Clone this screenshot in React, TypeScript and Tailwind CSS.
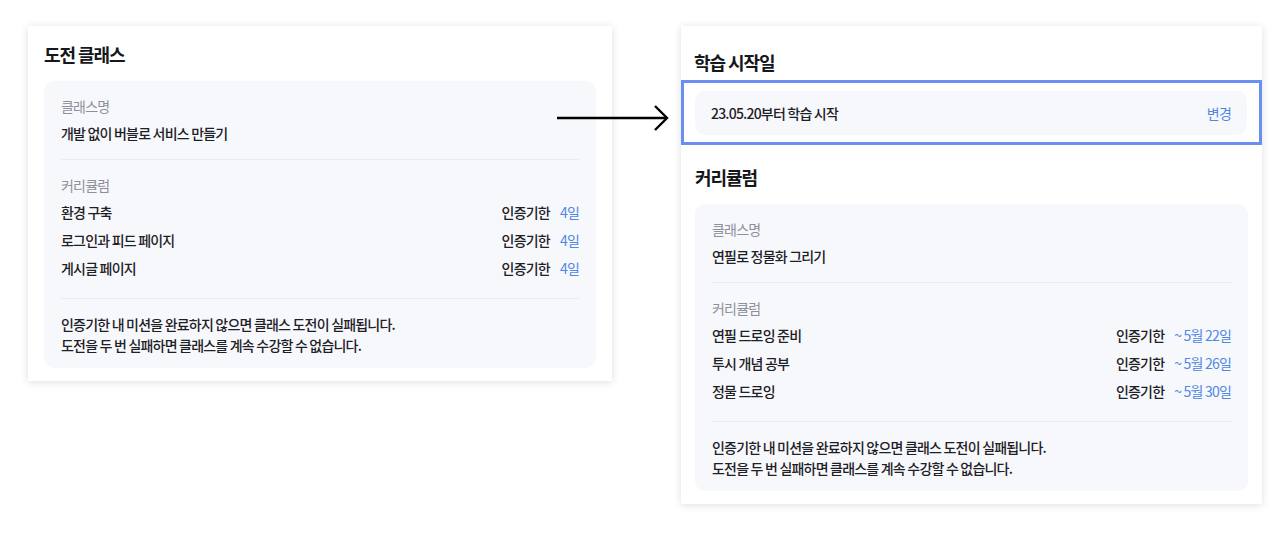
import React from 'react';

type Row = { title: string; due: string };

const leftRows: Row[] = [
  { title: '환경 구축', due: '4일' },
  { title: '로그인과 피드 페이지', due: '4일' },
  { title: '게시글 페이지', due: '4일' },
];

const rightRows: Row[] = [
  { title: '연필 드로잉 준비', due: '~ 5월 22일' },
  { title: '투시 개념 공부', due: '~ 5월 26일' },
  { title: '정물 드로잉', due: '~ 5월 30일' },
];

const ClassBox = ({ name, rows }: { name: string; rows: Row[] }) => (
  <div className="rounded-[10px] bg-[#f7f8fc] px-[17px] pt-[15px] pb-[12px]">
    <p className="text-[14px] leading-[20px] text-[#8c909a]">클래스명</p>
    <p className="mt-[7px] text-[14px] font-medium leading-[20px] text-[#1d2025]">{name}</p>
    <div className="mt-[16px] h-px bg-[#e9ebf0]" />
    <p className="mt-[15px] text-[14px] leading-[20px] text-[#8c909a]">커리큘럼</p>
    <div className="mt-[7px] flex flex-col gap-[8px]">
      {rows.map((r) => (
        <div key={r.title} className="flex items-center justify-between text-[14px] font-medium leading-[20px]">
          <span className="text-[#1d2025]">{r.title}</span>
          <span className="flex gap-[10px]">
            <span className="text-[#1d2025]">인증기한</span>
            <span className="font-normal text-[#4f87e3]">{r.due}</span>
          </span>
        </div>
      ))}
    </div>
    <div className="mt-[20px] h-px bg-[#e9ebf0]" />
    <p className="mt-[15px] text-[14px] font-medium leading-[21px] text-[#1d2025]">
      인증기한 내 미션을 완료하지 않으면 클래스 도전이 실패됩니다.
      <br />
      도전을 두 번 실패하면 클래스를 계속 수강할 수 없습니다.
    </p>
  </div>
);

export default function App() {
  return (
    <div
      className="relative h-[537px] w-[1280px] bg-white tracking-[-0.05em]"
      style={{ fontFamily: '"Noto Sans CJK KR", "Noto Sans", sans-serif' }}
    >
      <div className="flex items-start gap-[69px] pl-[28px] pt-[26px]">
        <div className="w-[584px] bg-white px-[16px] pt-[16px] pb-[13px] shadow-[0_1px_8px_rgba(0,0,0,0.13)]">
          <h2 className="text-[18px] font-bold leading-[24px] tracking-[-0.06em] text-[#15171b]">도전 클래스</h2>
          <div className="mt-[15px]">
            <ClassBox name="개발 없이 버블로 서비스 만들기" rows={leftRows} />
          </div>
        </div>

        <div className="w-[581px] bg-white pt-[24px] pb-[13px] shadow-[0_1px_8px_rgba(0,0,0,0.13)]">
          <h2 className="px-[13px] text-[18px] font-bold leading-[24px] tracking-[-0.06em] text-[#15171b]">학습 시작일</h2>
          <div className="mt-[6px] border-[3px] border-[#6a8ef2] pt-[8px] pr-[12px] pb-[7px] pl-[11px]">
            <div className="flex h-[44px] items-center justify-between rounded-[10px] bg-[#f7f8fc] px-[16px] text-[14px] font-medium">
              <span className="text-[#1d2025]">23.05.20부터 학습 시작</span>
              <span className="font-normal text-[#4f87e3]">변경</span>
            </div>
          </div>
          <div className="px-[14px]">
            <h2 className="mt-[20px] text-[18px] font-bold leading-[24px] tracking-[-0.06em] text-[#15171b]">커리큘럼</h2>
            <div className="mt-[15px]">
              <ClassBox name="연필로 정물화 그리기" rows={rightRows} />
            </div>
          </div>
        </div>
      </div>

      <svg className="absolute left-[555px] top-[104px]" width="116" height="28" viewBox="0 0 116 28" fill="none">
        <line x1="2" y1="14" x2="112" y2="14" stroke="#000" strokeWidth="2.4" />
        <polyline points="100,2 112,14 100,26" stroke="#000" strokeWidth="2.4" fill="none" />
      </svg>
    </div>
  );
}
